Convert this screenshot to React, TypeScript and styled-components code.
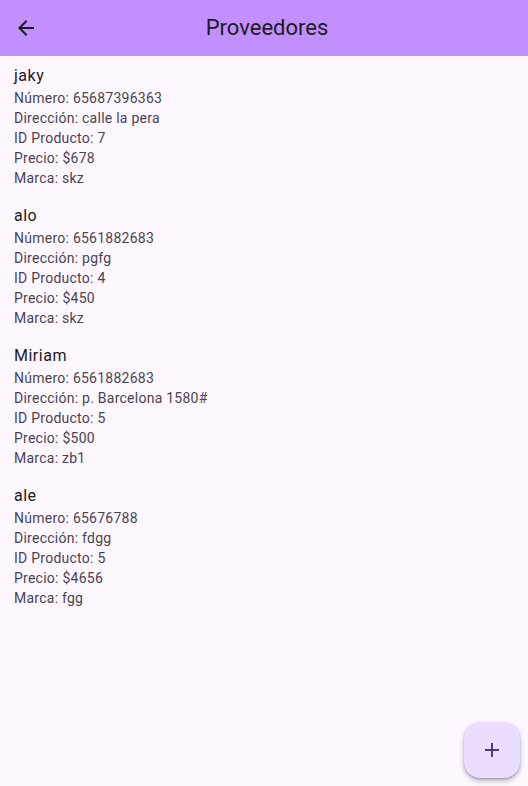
import styled, { createGlobalStyle } from 'styled-components';

const providers = [
    { name: 'jaky', numero: '65687396363', direccion: 'calle la pera', producto: '7', precio: '678', marca: 'skz' },
    { name: 'alo', numero: '6561882683', direccion: 'pgfg', producto: '4', precio: '450', marca: 'skz' },
    { name: 'Miriam', numero: '6561882683', direccion: 'p. Barcelona 1580#', producto: '5', precio: '500', marca: 'zb1' },
    { name: 'ale', numero: '65676788', direccion: 'fdgg', producto: '5', precio: '4656', marca: 'fgg' },
];

const GlobalStyle = createGlobalStyle`
    html, body {
        margin: 0;
        padding: 0;
        background: #fef7ff;
        font-family: Roboto, 'Liberation Sans', sans-serif;
    }
`;

const App = () => {
    return (
        <>
            <GlobalStyle />
            <Page>
                <AppBar>
                    <BackButton aria-label="back">
                        <svg width="24" height="24" viewBox="0 0 24 24">
                            <path d="M20 11H7.83l5.59-5.59L12 4l-8 8 8 8 1.41-1.41L7.83 13H20v-2z" fill="#1d1b20" />
                        </svg>
                    </BackButton>
                    <Title>Proveedores</Title>
                </AppBar>
                <List>
                    {providers.map((p) => (
                        <Tile key={p.name}>
                            <TileTitle>{p.name}</TileTitle>
                            <Line>Número: {p.numero}</Line>
                            <Line>Dirección: {p.direccion}</Line>
                            <Line>ID Producto: {p.producto}</Line>
                            <Line>Precio: ${p.precio}</Line>
                            <Line>Marca: {p.marca}</Line>
                        </Tile>
                    ))}
                </List>
                <Fab aria-label="add">
                    <svg width="24" height="24" viewBox="0 0 24 24">
                        <path d="M19 13h-6v6h-2v-6H5v-2h6V5h2v6h6v2z" fill="#4f378b" />
                    </svg>
                </Fab>
            </Page>
        </>
    );
};

const Page = styled.div`
    position: relative;
    width: 528px;
    height: 786px;
    background: #fef7ff;
    overflow: hidden;
`;

const AppBar = styled.header`
    height: 56px;
    background: #c190fe;
    display: flex;
    align-items: center;
    position: relative;
`;

const BackButton = styled.button`
    width: 48px;
    height: 48px;
    margin-left: 2px;
    border: none;
    background: transparent;
    display: flex;
    align-items: center;
    justify-content: center;
    padding: 0;
`;

const Title = styled.h1`
    position: absolute;
    left: 6px;
    right: 0;
    margin: 0;
    text-align: center;
    font-size: 22px;
    font-weight: 400;
    line-height: 28px;
    color: #1d1b20;
    pointer-events: none;
`;

const List = styled.div`
    display: flex;
    flex-direction: column;
    padding-top: 8px;
`;

const Tile = styled.div`
    display: flex;
    flex-direction: column;
    padding: 0 14px 16px;
`;

const TileTitle = styled.div`
    font-size: 16px;
    line-height: 24px;
    letter-spacing: 0.5px;
    color: #1d1b20;
`;

const Line = styled.div`
    font-size: 14px;
    line-height: 20px;
    letter-spacing: 0.25px;
    color: #49454f;
`;

const Fab = styled.button`
    position: absolute;
    right: 8px;
    bottom: 8px;
    width: 56px;
    height: 56px;
    border: none;
    border-radius: 16px;
    background: #eaddff;
    box-shadow: 0 3px 5px rgba(0, 0, 0, 0.25), 0 1px 2px rgba(0, 0, 0, 0.2);
    display: flex;
    align-items: center;
    justify-content: center;
    padding: 0;
`;

export default App;
